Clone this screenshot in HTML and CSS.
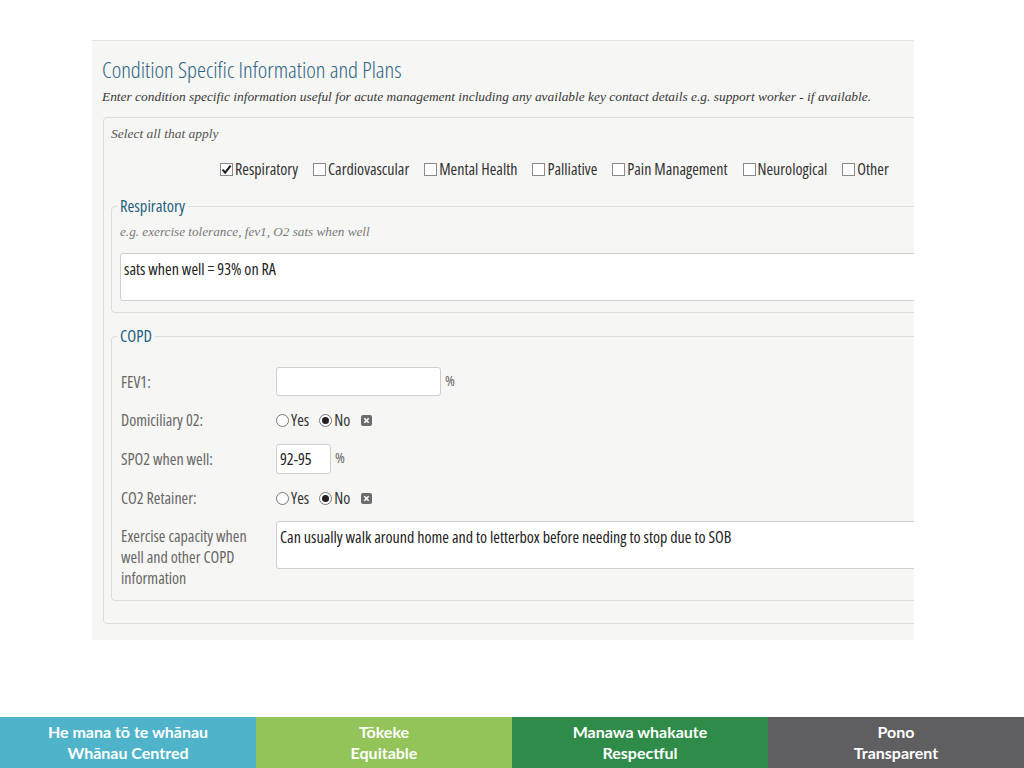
FILE: index.html
```html
<!DOCTYPE html>
<html lang="en">
<head>
<meta charset="utf-8">
<title>Condition Specific Information and Plans</title>
<link rel="stylesheet" href="styles.css">
</head>
<body>
<div class="page">
  <div class="shot">
    <h1 class="title">Condition Specific Information and Plans</h1>
    <p class="subtitle">Enter condition specific information useful for acute management including any available key contact details e.g. support worker - if available.</p>
    <fieldset class="outer">
      <p class="select-note">Select all that apply</p>
      <div class="checks">
        <label class="check"><span class="box checked"><svg viewBox="0 0 13 13" width="13" height="13"><path d="M2.6 6.6 L5.2 9.6 L10.6 2.6" fill="none" stroke="#222" stroke-width="2.2"/></svg></span>Respiratory</label>
        <label class="check"><span class="box"></span>Cardiovascular</label>
        <label class="check"><span class="box"></span>Mental Health</label>
        <label class="check"><span class="box"></span>Palliative</label>
        <label class="check"><span class="box"></span>Pain Management</label>
        <label class="check"><span class="box"></span>Neurological</label>
        <label class="check"><span class="box"></span>Other</label>
      </div>
      <fieldset class="inner resp">
        <legend>Respiratory</legend>
        <p class="hint">e.g. exercise tolerance, fev1, O2 sats when well</p>
        <div class="textarea tall">sats when well = 93% on RA</div>
      </fieldset>
      <fieldset class="inner copd">
        <legend>COPD</legend>
        <div class="grid">
          <div class="lbl">FEV1:</div>
          <div class="ctl"><span class="input wide"></span><span class="unit">%</span></div>

          <div class="lbl">Domiciliary 02:</div>
          <div class="ctl">
            <span class="radio"></span><span class="rtext">Yes</span>
            <span class="radio on"></span><span class="rtext">No</span>
            <span class="clear"><svg viewBox="0 0 11 11" width="11" height="11"><path d="M3.3 3.3 L7.7 7.7 M7.7 3.3 L3.3 7.7" stroke="#fff" stroke-width="1.6"/></svg></span>
          </div>

          <div class="lbl">SPO2 when well:</div>
          <div class="ctl"><span class="input narrow">92-95</span><span class="unit">%</span></div>

          <div class="lbl">CO2 Retainer:</div>
          <div class="ctl">
            <span class="radio"></span><span class="rtext">Yes</span>
            <span class="radio on"></span><span class="rtext">No</span>
            <span class="clear"><svg viewBox="0 0 11 11" width="11" height="11"><path d="M3.3 3.3 L7.7 7.7 M7.7 3.3 L3.3 7.7" stroke="#fff" stroke-width="1.6"/></svg></span>
          </div>

          <div class="lbl multi">Exercise capacity when well and other COPD information</div>
          <div class="ctl top"><div class="textarea">Can usually walk around home and to letterbox before needing to stop due to SOB</div></div>
        </div>
      </fieldset>
    </fieldset>
  </div>
  <footer class="values">
    <div class="value v1">He mana tō te whānau<br>Whānau Centred</div>
    <div class="value v2">Tōkeke<br>Equitable</div>
    <div class="value v3">Manawa whakaute<br>Respectful</div>
    <div class="value v4">Pono<br>Transparent</div>
  </footer>
</div>
</body>
</html>
```

FILE: styles.css
```css
* { box-sizing: border-box; }
html, body { margin: 0; padding: 0; background: #ffffff; }
.page {
  height: 768px;
  display: flex;
  flex-direction: column;
}
.shot {
  margin: 40px 0 0 92px;
  width: 822px;
  height: 600px;
  background: #f6f6f4;
  border-top: 1px solid #e3e3e3;
  overflow: hidden;
  padding-left: 10px;
  font-family: "Open Sans", sans-serif;
  font-stretch: 75%;
}
.title {
  margin: 17px 0 0 0;
  font-size: 22.7px;
  line-height: 24px;
  font-weight: 300;
  color: #2d6584;
}
.subtitle {
  margin: 6px 0 0 0;
  font-family: "Liberation Serif", serif;
  font-style: italic;
  font-size: 13.4px;
  line-height: 18px;
  color: #383838;
  white-space: nowrap;
}
fieldset {
  margin: 0;
  min-width: 0;
  border: 1px solid #dcdcda;
  border-radius: 4px;
}
.outer {
  margin: 11px 0 0 1px;
  width: 900px;
  padding: 7px 0 22px 7px;
}
.select-note {
  margin: 0;
  font-family: "Liberation Serif", serif;
  font-style: italic;
  font-size: 13.5px;
  line-height: 18px;
  color: #555;
}
.checks {
  margin: 16px 0 0 109px;
  display: flex;
  gap: 15px;
  height: 20px;
  align-items: center;
}
.check {
  display: flex;
  align-items: center;
  gap: 2px;
  font-size: 16px;
  line-height: 20px;
  color: #333;
}
.box {
  width: 13px;
  height: 13px;
  border: 1px solid #8a8a8a;
  background: #fff;
  display: inline-block;
  position: relative;
}
.box svg { position: absolute; left: -1px; top: -1px; }
.inner {
  padding: 0 0 11px 8px;
}
.inner legend {
  padding: 0 3px;
  margin-left: -3px;
  font-size: 16.5px;
  line-height: 20px;
  color: #1f5f80;
}
.resp { margin-top: 17px; width: 880px; }
.copd { margin-top: 13px; width: 880px; }
.hint {
  margin: 7px 0 0 0;
  font-family: "Liberation Serif", serif;
  font-style: italic;
  font-size: 13.2px;
  line-height: 18px;
  color: #7a7a7a;
}
.textarea {
  background: #fff;
  border: 1px solid #cfcfcf;
  border-radius: 3px;
  height: 48px;
  width: 820px;
  padding: 5px 3px;
  font-size: 16px;
  line-height: 20px;
  color: #222;
}
.tall { margin-top: 12px; }
.grid {
  margin-top: 20px;
  display: grid;
  grid-template-columns: 156px 1fr;
  grid-auto-rows: minmax(30px, auto);
  row-gap: 8.5px;
}
.lbl {
  font-size: 16px;
  line-height: 20px;
  color: #666;
  padding-left: 1px;
  display: flex;
  align-items: center;
  padding-top: 1px;
}
.lbl.multi {
  display: block;
  line-height: 21px;
  padding-top: 5px;
  width: 140px;
}
.ctl {
  display: flex;
  align-items: center;
  padding-top: 1px;
}
.ctl.top { align-items: flex-start; padding-top: 0; }
.input {
  background: #fff;
  border: 1px solid #cfcfcf;
  border-radius: 3px;
  height: 30px;
  padding: 4px 3px;
  font-size: 16px;
  line-height: 20px;
  color: #222;
}
.input.wide { width: 165px; height: 29px; }
.input.narrow { width: 55px; }
.unit {
  align-self: flex-start;
  margin-left: 4px;
  font-size: 15px;
  line-height: 20px;
  margin-top: 3px;
  color: #666;
}
.radio {
  width: 13px;
  height: 13px;
  border: 1px solid #777;
  border-radius: 50%;
  background: #fff;
  display: inline-flex;
  align-items: center;
  justify-content: center;
}
.radio.on::after {
  content: "";
  width: 7px;
  height: 7px;
  border-radius: 50%;
  background: #222;
}
.rtext {
  margin: 0 10px 0 2px;
  font-size: 16px;
  line-height: 20px;
  color: #333;
}
.clear {
  width: 11px;
  height: 11px;
  border-radius: 2px;
  background: #6c6c6c;
  display: inline-flex;
  margin-left: 1px;
}
.values {
  margin-top: auto;
  height: 51px;
  display: grid;
  grid-template-columns: repeat(4, 1fr);
}
.value {
  color: #fff;
  font-family: "Lato", "Open Sans", sans-serif;
  font-weight: 700;
  font-size: 16px;
  line-height: 21px;
  text-align: center;
  padding-top: 4px;
}
.v1 { background: #4fb4c9; }
.v2 { background: #93c45a; }
.v3 { background: #2f8c48; }
.v4 { background: #5f5f61; }
```
